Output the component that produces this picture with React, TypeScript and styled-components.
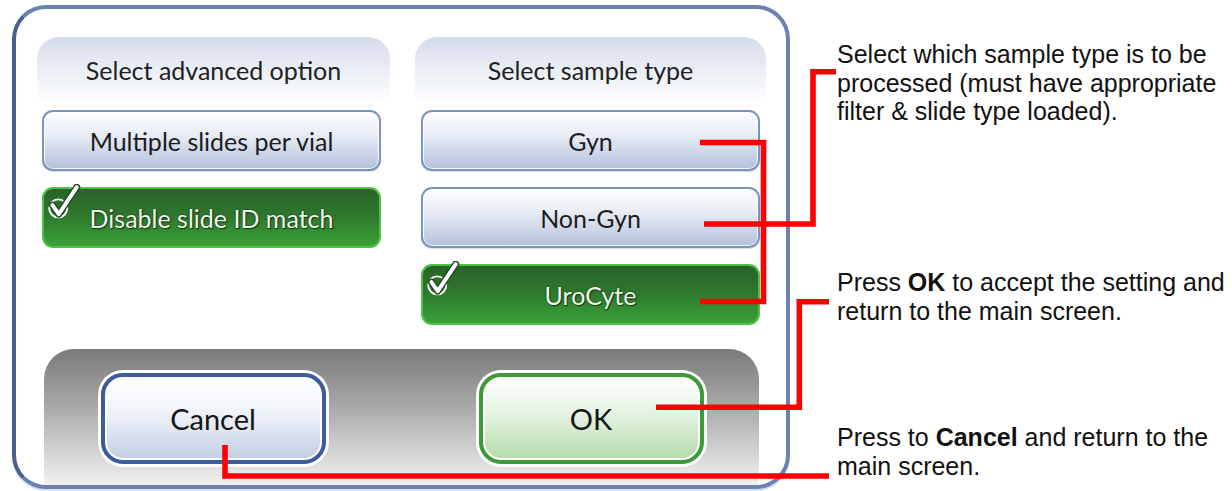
import React from "react";
import styled, { createGlobalStyle, css } from "styled-components";

const GlobalStyle = createGlobalStyle`
  html, body {
    margin: 0;
    padding: 0;
    background: #fff;
  }
  body {
    font-family: "Liberation Sans", Arial, sans-serif;
  }
`;

const Page = styled.div`
  position: relative;
  width: 1232px;
  height: 491px;
  overflow: hidden;
  display: flex;
  align-items: flex-start;
  background: #fff;
`;

const Screen = styled.div`
  box-sizing: border-box;
  margin: 5px 0 0 12px;
  width: 778px;
  height: 484px;
  border: 4px solid #6b81b3;
  border-left-color: #4b5e8d;
  border-radius: 34px;
  box-shadow: 0 2px 0 #d3e1f0;
  background: #fff;
  overflow: hidden;
  display: flex;
  flex-direction: column;
  font-family: Lato, "Open Sans", sans-serif;
`;

const Columns = styled.div`
  display: grid;
  grid-template-columns: 353px 351px;
  column-gap: 25px;
  padding: 28px 0 0 21px;
`;

const Column = styled.div`
  display: flex;
  flex-direction: column;
`;

const Header = styled.div`
  height: 66px;
  margin-bottom: 7px;
  border-radius: 22px 22px 0 0;
  background: linear-gradient(
    to bottom,
    #d5dbe9 0%,
    #eaeef5 50%,
    #ffffff 100%
  );
  display: flex;
  align-items: center;
  justify-content: center;
  font-size: 25px;
  color: #222;
`;

const ButtonStack = styled.div<{ $inset: number }>`
  display: flex;
  flex-direction: column;
  gap: 16px;
  padding-left: ${(p) => p.$inset}px;
`;

const blueFace = css`
  border: 2px solid #7c92bf;
  background: linear-gradient(
    to bottom,
    #fdfeff 0%,
    #e8edf5 40%,
    #b3c1db 100%
  );
  box-shadow: inset 0 0 0 1px rgba(255, 255, 255, 0.85),
    0 1px 1px rgba(0, 0, 0, 0.15);
  color: #1c1c22;
`;

const greenFace = css`
  border: 2px solid #4fc047;
  background: linear-gradient(
    to bottom,
    #29632a 0%,
    #2e772d 45%,
    #39a236 100%
  );
  color: #eef6e8;
  text-shadow: 0 0 2px #163816, 1px 1px 1px #163816;
`;

const OptionButton = styled.button<{ $selected?: boolean }>`
  position: relative;
  box-sizing: border-box;
  width: 339px;
  height: 61px;
  padding: 0;
  border-radius: 11px;
  font-family: inherit;
  font-size: 25px;
  display: flex;
  align-items: center;
  justify-content: center;
  ${(p) => (p.$selected ? greenFace : blueFace)}
`;

const Tick = styled.svg`
  position: absolute;
  left: 1px;
  top: -5px;
  width: 36px;
  height: 36px;
`;

const ActionBar = styled.div`
  box-sizing: border-box;
  align-self: center;
  width: 715px;
  flex: 1;
  margin-top: 24px;
  padding: 24px 55px 0 57px;
  border-radius: 30px 30px 0 0;
  background: linear-gradient(
    to bottom,
    #7a7a7a 0%,
    #a6a6a6 40%,
    #d6d6d6 78%,
    #f1f1f1 100%
  );
  display: flex;
  justify-content: space-between;
  align-items: flex-start;
`;

const DialogButton = styled.button<{ $tone: "blue" | "green" }>`
  box-sizing: border-box;
  width: 225px;
  height: 91px;
  padding: 0;
  border-radius: 22px;
  border: 4px solid ${(p) => (p.$tone === "blue" ? "#3b5d9c" : "#3c9a39")};
  box-shadow: 0 0 0 3px #fff, inset 0 0 0 2px #fff;
  background: ${(p) =>
    p.$tone === "blue"
      ? "linear-gradient(to bottom, #ffffff 0%, #eef2f8 45%, #c2cee3 100%)"
      : "linear-gradient(to bottom, #ffffff 0%, #e5f2e2 45%, #b3dbaa 100%)"};
  font-family: inherit;
  font-size: 29px;
  color: #161616;
`;

const Notes = styled.div`
  margin-left: 47px;
  display: flex;
  flex-direction: column;
  font-family: "Liberation Sans", Arial, sans-serif;
  font-size: 25px;
  line-height: 28.5px;
  color: #111;
`;

const Note = styled.p<{ $top: number }>`
  margin: ${(p) => p.$top}px 0 0;
  white-space: nowrap;
`;

const Callouts = styled.svg`
  position: absolute;
  left: 0;
  top: 0;
  width: 1232px;
  height: 491px;
  pointer-events: none;
`;

const CheckMark = () => (
  <Tick viewBox="0 0 34 34">
    <circle cx="12.5" cy="23" r="8.5" fill="none" stroke="#ffffff" strokeWidth="1.8" />
    <path
      d="M7 20 L13 28.5 L30 3"
      fill="none"
      stroke="#1d4a1d"
      strokeWidth="6.5"
      strokeLinecap="round"
      strokeLinejoin="round"
    />
    <path
      d="M7 20 L13 28.5 L30 3"
      fill="none"
      stroke="#ffffff"
      strokeWidth="3.8"
      strokeLinecap="round"
      strokeLinejoin="round"
    />
  </Tick>
);

const lines = [
  "700,142.5 763.5,142.5 763.5,301.5 700,301.5",
  "704,224 813,224 813,71.8 836,71.8",
  "656,407.3 799.3,407.3 799.3,301.8 829,301.8",
  "225,445 225,476 829,476",
];

export default function App() {
  return (
    <>
      <GlobalStyle />
      <Page>
        <Screen>
          <Columns>
            <Column>
              <Header>Select advanced option</Header>
              <ButtonStack $inset={5}>
                <OptionButton>Multiple slides per vial</OptionButton>
                <OptionButton $selected>
                  <CheckMark />
                  Disable slide ID match
                </OptionButton>
              </ButtonStack>
            </Column>
            <Column>
              <Header>Select sample type</Header>
              <ButtonStack $inset={6}>
                <OptionButton>Gyn</OptionButton>
                <OptionButton>Non-Gyn</OptionButton>
                <OptionButton $selected>
                  <CheckMark />
                  UroCyte
                </OptionButton>
              </ButtonStack>
            </Column>
          </Columns>
          <ActionBar>
            <DialogButton $tone="blue">Cancel</DialogButton>
            <DialogButton $tone="green">OK</DialogButton>
          </ActionBar>
        </Screen>
        <Notes>
          <Note $top={40}>
            Select which sample type is to be
            <br />
            processed (must have appropriate
            <br />
            filter &amp; slide type loaded).
          </Note>
          <Note $top={142.5}>
            Press <b>OK</b> to accept the setting and
            <br />
            return to the main screen.
          </Note>
          <Note $top={98}>
            Press to <b>Cancel</b> and return to the
            <br />
            main screen.
          </Note>
        </Notes>
        <Callouts viewBox="0 0 1232 491">
          {lines.map((pts) => (
            <polyline
              key={pts}
              points={pts}
              fill="none"
              stroke="#ff0000"
              strokeWidth="5.6"
              strokeLinejoin="miter"
            />
          ))}
        </Callouts>
      </Page>
    </>
  );
}
